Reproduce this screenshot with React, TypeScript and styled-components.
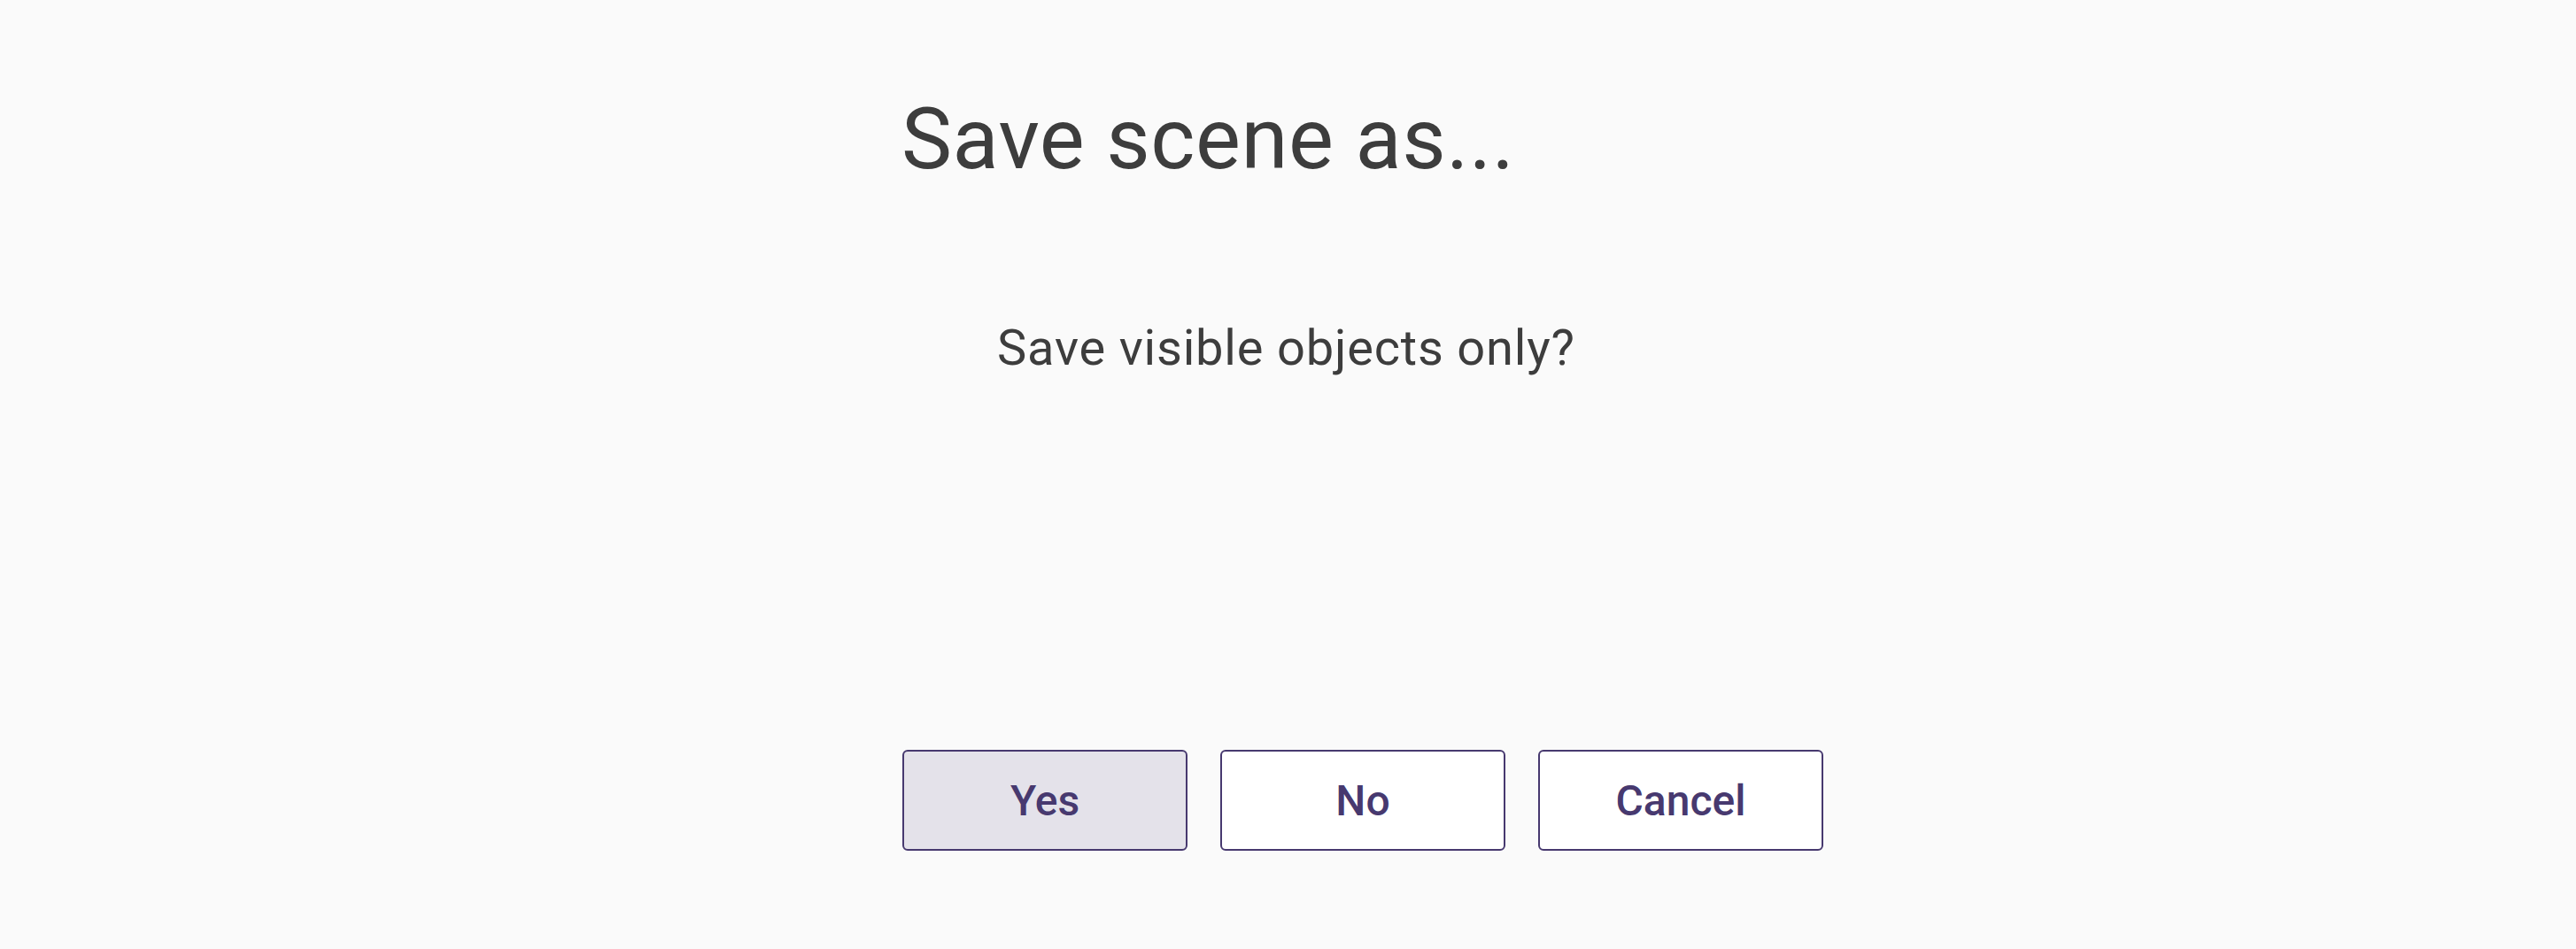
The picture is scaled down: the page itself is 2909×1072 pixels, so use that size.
import React from "react";
import styled, { createGlobalStyle } from "styled-components";

const Global = createGlobalStyle`
  html, body { margin: 0; padding: 0; background: #fafafa; overflow: hidden; }
  body { font-family: Roboto, "Liberation Sans", sans-serif; }
`;

const Page = styled.div`
  width: 2909px;
  height: 1072px;
  background: #fafafa;
`;

const Dialog = styled.div`
  display: flex;
  flex-direction: column;
  align-items: flex-start;
  margin-left: 1018px;
  padding-top: 100px;
`;

const Title = styled.h1`
  margin: 0;
  font-family: Roboto, "Liberation Sans", sans-serif;
  font-weight: 400;
  font-size: 96px;
  letter-spacing: 0.45px;
  line-height: 1.2;
  color: #3d3d3d;
`;

const Message = styled.p`
  margin: 145px 0 0 108px;
  font-family: Roboto, "Liberation Sans", sans-serif;
  font-weight: 400;
  font-size: 56px;
  letter-spacing: 0.8px;
  line-height: 1.2;
  color: #3d3d3d;
`;

const ButtonRow = styled.div`
  display: flex;
  gap: 37px;
  margin-top: 420px;
  margin-left: 1px;
`;

const Button = styled.button<{ $primary?: boolean }>`
  box-sizing: border-box;
  width: 322px;
  height: 114px;
  border: 2px solid #47396f;
  border-radius: 6px;
  background: ${(p) => (p.$primary ? "#e4e2ea" : "#ffffff")};
  color: #47396f;
  font-family: Roboto, "Liberation Sans", sans-serif;
  font-weight: 500;
  font-size: 48px;
  display: flex;
  align-items: center;
  justify-content: center;
  padding: 0;
  cursor: pointer;
`;

export default function App() {
  return (
    <>
      <Global />
      <Page>
        <Dialog>
          <Title>Save scene as...</Title>
          <Message>Save visible objects only?</Message>
          <ButtonRow>
            <Button $primary>Yes</Button>
            <Button>No</Button>
            <Button>Cancel</Button>
          </ButtonRow>
        </Dialog>
      </Page>
    </>
  );
}
